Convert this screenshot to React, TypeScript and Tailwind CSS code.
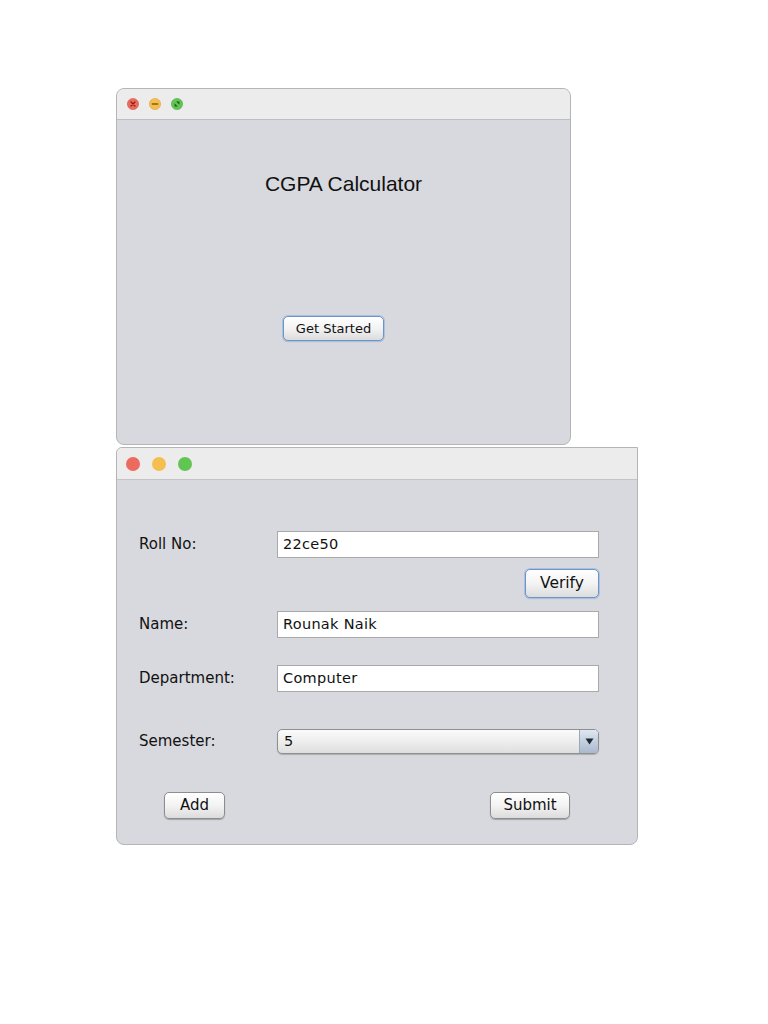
import React from 'react';

const labelFont = { fontFamily: '"DejaVu Sans", "Liberation Sans", sans-serif' };

function Lights({ small }: { small?: boolean }) {
  if (small) {
    return (
      <div className="flex items-center gap-[10px] pl-[10px]">
        {/* close */}
        <svg width="12" height="12" viewBox="0 0 12 12">
          <circle cx="6" cy="6" r="5.6" fill="#ec6a5e" stroke="#d25548" strokeWidth="0.6" />
          <path d="M4 4L8 8M8 4L4 8" stroke="#8c1a10" strokeWidth="1.2" strokeLinecap="round" />
        </svg>
        {/* minimize */}
        <svg width="12" height="12" viewBox="0 0 12 12">
          <circle cx="6" cy="6" r="5.6" fill="#f4bf4f" stroke="#d9a43c" strokeWidth="0.6" />
          <path d="M3.3 6H8.7" stroke="#8f5a0a" strokeWidth="1.4" strokeLinecap="round" />
        </svg>
        {/* zoom */}
        <svg width="12" height="12" viewBox="0 0 12 12">
          <circle cx="6" cy="6" r="5.6" fill="#61c554" stroke="#4ea73f" strokeWidth="0.6" />
          <path d="M3.6 8.4V5.2L6.8 8.4Z M8.4 3.6V6.8L5.2 3.6Z" fill="#1c5c14" />
        </svg>
      </div>
    );
  }
  return (
    <div className="flex items-center gap-[12px] pl-[9px]">
      <span className="block h-[14px] w-[14px] rounded-full bg-[#ec6a5e]" />
      <span className="block h-[14px] w-[14px] rounded-full bg-[#f4bf4f]" />
      <span className="block h-[14px] w-[14px] rounded-full bg-[#61c554]" />
    </div>
  );
}

function MacButton({ label, focused, className = '' }: { label: string; focused?: boolean; className?: string }) {
  return (
    <button
      className={
        'flex items-center justify-center rounded-[5px] border bg-gradient-to-b from-white via-[#f3f3f3] to-[#dcdcdc] text-[#111] shadow-[0_1px_1px_rgba(0,0,0,0.25)] ' +
        (focused ? 'border-[#6f93c4] ring-1 ring-[#a9c2e3] ' : 'border-[#8d8d8d] ') +
        className
      }
      style={labelFont}
    >
      {label}
    </button>
  );
}

function Field({ label, value }: { label: string; value: string }) {
  return (
    <div className="flex items-center">
      <span className="w-[138px] text-[15px] text-[#111]" style={labelFont}>
        {label}
      </span>
      <div
        className="flex h-[27px] w-[322px] items-center border border-[#a9a9a9] bg-white pl-[5px] text-[14.5px] tracking-[0.3px] text-[#111]"
        style={labelFont}
      >
        {value}
      </div>
    </div>
  );
}

export default function App() {
  return (
    <main className="min-h-[1024px] w-[768px] bg-white pl-[116px] pt-[88px]">
      {/* 起動画面 */}
      <div className="flex h-[357px] w-[455px] flex-col overflow-hidden rounded-[8px] border border-[#b5b5b5] bg-[#d8d9de]">
        <div className="flex h-[31px] items-center border-b border-[#bdbdc2] bg-[#ececec]">
          <Lights small />
        </div>
        <div className="flex flex-1 flex-col items-center pt-[51px]">
          <h1
            className="text-[21px] leading-[26px] text-[#111]"
            style={{ fontFamily: '"Liberation Sans", Arial, sans-serif' }}
          >
            CGPA Calculator
          </h1>
          <div className="flex w-full justify-center pr-[20px] pt-[119px]">
            <MacButton label="Get Started" focused className="h-[25px] w-[101px] text-[13px]" />
          </div>
        </div>
      </div>

      {/* 入力フォーム */}
      <div className="mt-[2px] flex h-[398px] w-[522px] flex-col overflow-hidden rounded-b-[8px] rounded-tl-[6px] border border-[#b5b5b5] bg-[#d8d9de]">
        <div className="flex h-[32px] items-center border-b border-[#c4c4c8] bg-[#ececec]">
          <Lights />
        </div>
        <div className="flex flex-col pl-[22px] pt-[51px]">
          <Field label="Roll No:" value="22ce50" />
          <div className="mt-[11px] flex w-[460px] justify-end">
            <MacButton label="Verify" focused className="h-[29px] w-[74px] text-[15.5px]" />
          </div>
          <div className="mt-[13px]">
            <Field label="Name:" value="Rounak Naik" />
          </div>
          <div className="mt-[27px]">
            <Field label="Department:" value="Computer" />
          </div>
          <div className="mt-[37px] flex items-center">
            <span className="w-[138px] text-[15px] text-[#111]" style={labelFont}>
              Semester:
            </span>
            <div className="flex h-[25px] w-[322px] items-stretch overflow-hidden rounded-[5px] border border-[#8f8f8f] bg-gradient-to-b from-[#fbfbfb] via-[#eeeeee] to-[#dedede] shadow-[0_1px_1px_rgba(0,0,0,0.2)]">
              <span className="flex flex-1 items-center pl-[6px] text-[14.5px] text-[#111]" style={labelFont}>
                5
              </span>
              <span className="flex w-[19px] items-center justify-center border-l border-[#9aa7b8] bg-gradient-to-b from-[#dfe7f1] to-[#a9b9cc]">
                <svg width="9" height="7" viewBox="0 0 9 7">
                  <path d="M0.5 0.5H8.5L4.5 6.5Z" fill="#1f2a38" />
                </svg>
              </span>
            </div>
          </div>
          <div className="mt-[38px] flex items-center">
            <MacButton label="Add" className="ml-[25px] h-[27px] w-[61px] text-[15px]" />
            <MacButton label="Submit" className="ml-[265px] h-[27px] w-[80px] text-[15px]" />
          </div>
        </div>
      </div>
    </main>
  );
}
